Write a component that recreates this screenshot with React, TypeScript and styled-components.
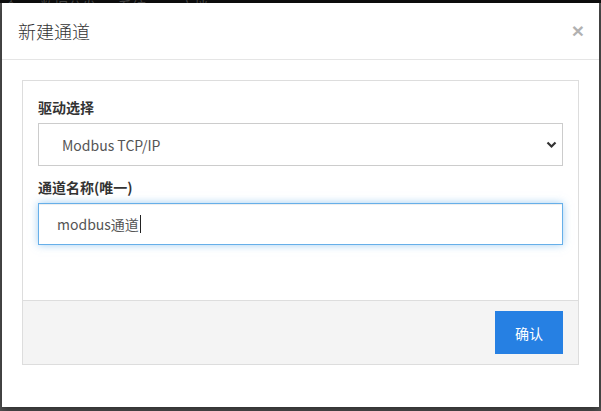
import React from "react";
import styled, { createGlobalStyle } from "styled-components";

const Global = createGlobalStyle`
  html, body { margin: 0; padding: 0; }
  body {
    background: #545454;
    font-family: "Noto Sans CJK SC", "Noto Sans", sans-serif;
    width: 601px;
    height: 411px;
    overflow: hidden;
  }
`;

const Page = styled.div`
  display: flex;
  flex-direction: column;
  width: 601px;
  height: 411px;
`;

const NavStrip = styled.div`
  height: 3px;
  background: #0e0e0e;
  overflow: hidden;
  display: flex;
  align-items: flex-end;
  flex-shrink: 0;
`;

const NavItems = styled.div`
  display: flex;
  gap: 22px;
  padding-left: 4px;
  font-size: 14px;
  line-height: 14px;
  color: #4a4a4a;
  margin-bottom: -10px;
  white-space: nowrap;
`;

const NavItem = styled.span<{ $w: number }>`
  display: inline-block;
  width: ${(p) => p.$w}px;
`;

const Dialog = styled.div`
  margin: 0 2px;
  width: 597px;
  height: 404px;
  background: #fff;
  display: flex;
  flex-direction: column;
  box-shadow: 0 3px 9px rgba(0, 0, 0, 0.5);
`;

const Header = styled.div`
  display: flex;
  align-items: center;
  justify-content: space-between;
  padding: 15px 16px 15px 16px;
  height: 26px;
  border-bottom: 1px solid #e5e5e5;
`;

const Title = styled.h4`
  margin: 0;
  font-size: 18px;
  font-weight: 300;
  color: #333;
  line-height: 26px;
`;

const Close = styled.span`
  font-family: "Liberation Sans", Arial, sans-serif;
  font-size: 21px;
  font-weight: 700;
  color: #000;
  opacity: 0.3;
  line-height: 1;
  margin-right: -1px;
  margin-top: -2px;
`;

const Body = styled.div`
  padding: 20px 20px 0 20px;
`;

const Panel = styled.div`
  border: 1px solid #ddd;
  display: flex;
  flex-direction: column;
`;

const PanelBody = styled.div`
  padding: 16px 15px 0 15px;
  height: 203px;
`;

const FormGroup = styled.div<{ $mb: number }>`
  display: flex;
  flex-direction: column;
  margin-bottom: ${(p) => p.$mb}px;
`;

const Label = styled.label`
  font-size: 14px;
  font-weight: 700;
  color: #333;
  line-height: 20px;
  margin-bottom: 6px;
`;

const SelectWrap = styled.div`
  position: relative;
  height: 43px;
`;

const Select = styled.select`
  appearance: none;
  -webkit-appearance: none;
  width: 100%;
  height: 43px;
  box-sizing: border-box;
  border: 1px solid #ccc;
  border-radius: 0;
  background: #fff;
  padding: 0 0 0 23px;
  font-family: "Noto Sans CJK SC", "Noto Sans", sans-serif;
  font-size: 14px;
  color: #555;
  outline: none;
`;

const Chevron = styled.svg`
  position: absolute;
  right: 6px;
  top: 18px;
  pointer-events: none;
`;

const FakeInput = styled.div`
  height: 42px;
  box-sizing: border-box;
  border: 1px solid #66afe9;
  box-shadow: inset 0 1px 1px rgba(0, 0, 0, 0.075),
    0 0 8px rgba(102, 175, 233, 0.6);
  padding: 0 18px;
  display: flex;
  align-items: center;
  font-size: 14px;
  color: #555;
  background: #fff;
`;

const Caret = styled.span`
  display: inline-block;
  width: 1px;
  height: 18px;
  background: #222;
  margin-left: 1px;
`;

const PanelFooter = styled.div`
  background: #f4f4f4;
  border-top: 1px solid #ddd;
  display: flex;
  justify-content: flex-end;
  padding: 10px 15px 10px 15px;
`;

const Button = styled.button`
  width: 68px;
  height: 43px;
  border: none;
  border-radius: 0;
  background: #2680e3;
  color: #fff;
  font-family: "Noto Sans CJK SC", "Noto Sans", sans-serif;
  font-size: 14px;
  cursor: pointer;
`;

export default function App() {
  return (
    <>
      <Global />
      <Page>
        <NavStrip>
          <NavItems>
            <NavItem $w={14}>众</NavItem>
            <NavItem $w={56}>数据分发</NavItem>
            <NavItem $w={40}>系统 ▾</NavItem>
            <NavItem $w={30}>文档</NavItem>
          </NavItems>
        </NavStrip>
        <Dialog>
          <Header>
            <Title>新建通道</Title>
            <Close>×</Close>
          </Header>
          <Body>
            <Panel>
              <PanelBody>
                <FormGroup $mb={11}>
                  <Label>驱动选择</Label>
                  <SelectWrap>
                    <Select defaultValue="modbus">
                      <option value="modbus">Modbus TCP/IP</option>
                    </Select>
                    <Chevron width="11" height="8" viewBox="0 0 11 8">
                      <polyline
                        points="1.5,1.5 5.5,5.5 9.5,1.5"
                        fill="none"
                        stroke="#333"
                        strokeWidth="2.2"
                      />
                    </Chevron>
                  </SelectWrap>
                </FormGroup>
                <FormGroup $mb={0}>
                  <Label>通道名称(唯一)</Label>
                  <FakeInput role="textbox">
                    modbus通道
                    <Caret />
                  </FakeInput>
                </FormGroup>
              </PanelBody>
              <PanelFooter>
                <Button>确认</Button>
              </PanelFooter>
            </Panel>
          </Body>
        </Dialog>
      </Page>
    </>
  );
}
